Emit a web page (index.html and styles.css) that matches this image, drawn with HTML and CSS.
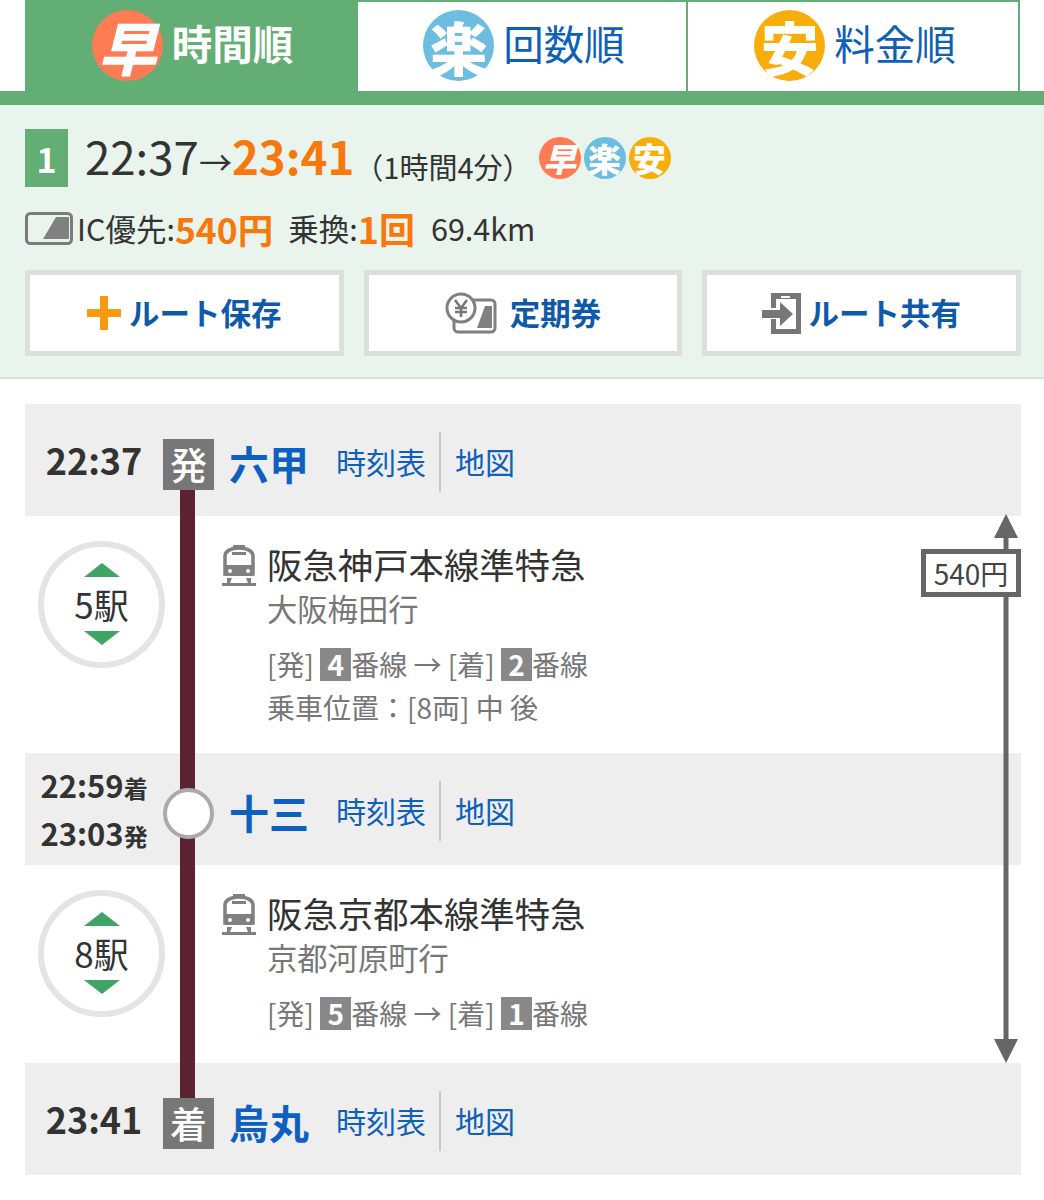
FILE: index.html
```html
<!DOCTYPE html>
<html lang="ja">
<head>
<meta charset="utf-8">
<title>経路検索結果</title>
<link rel="stylesheet" href="styles.css">
</head>
<body>
<nav class="tabs">
  <a class="tab tab-on"><span class="mark mark-fast">早</span>時間順</a>
  <a class="tab tab-mid"><span class="mark mark-easy">楽</span>回数順</a>
  <a class="tab"><span class="mark mark-cheap">安</span>料金順</a>
</nav>
<div class="tab-bar"></div>

<section class="summary">
  <div class="sum-head">
    <span class="rank">1</span>
    <span class="clock">22:37<span class="clock-arrow">→</span><b>23:41</b></span>
    <span class="duration">（1時間4分）</span>
    <span class="mini-marks">
      <span class="mini mark-fast"><i>早</i></span>
      <span class="mini mark-easy"><i>楽</i></span>
      <span class="mini mark-cheap"><i>安</i></span>
    </span>
  </div>
  <div class="sum-info">
    <svg class="ic-card" viewBox="0 0 48 33"><rect x="1.5" y="1.5" width="45" height="30" rx="4" fill="none" stroke="#7b7b7b" stroke-width="3"/><polygon points="18,27 31,5 44,5 44,27" fill="#808080"/></svg>
    <span class="ic-label">IC優先:</span><b class="hot">540円</b>
    <span class="info-gap">乗換:</span><b class="hot hot-count">1回</b>
    <span class="info-gap dist">69.4km</span>
  </div>
  <div class="actions">
    <a class="action">
      <svg class="ico-plus" viewBox="0 0 34 34"><path d="M13 0h8v13h13v8H21v13h-8V21H0v-8h13z" fill="#f79a12"/></svg>ルート保存
    </a>
    <a class="action">
      <svg class="ico-pass" viewBox="0 0 52 42"><rect x="9" y="8" width="41" height="32" rx="4" fill="#fff" stroke="#808080" stroke-width="3"/><polygon points="32,36 40,14 47,14 47,36" fill="#808080"/><circle cx="16" cy="16" r="14" fill="#fff" stroke="#808080" stroke-width="3"/><path d="M10 8l6 8 6-8M16 16v9M10 16h12M10 20h12" fill="none" stroke="#777" stroke-width="2.6"/></svg>定期券
    </a>
    <a class="action">
      <svg class="ico-share" viewBox="0 0 39 41"><path d="M9 0h30v41H9V26h5v10h20V6H14v9H9z" fill="#777"/><rect x="19" y="3" width="9" height="2" fill="#fff"/><path d="M0 17h18V9l13 12-13 12v-8H0z" fill="#777"/></svg>ルート共有
    </a>
  </div>
</section>

<main class="route">
  <div class="rail"></div>
  <svg class="fare-arrow" viewBox="0 0 24 549"><path d="M12 0l12 24H14.500V525H24L12 549 0 525h9.500V24H0z" fill="#666"/></svg>
  <div class="fare">540円</div>

  <div class="station">
    <div class="st-time">22:37</div>
    <div class="st-badge">発</div>
    <div class="st-name">六甲</div>
    <a class="st-link st-link-first">時刻表</a><a class="st-link">地図</a>
  </div>

  <div class="leg">
    <div class="stops"><span class="up"></span><span class="count">5駅</span><span class="down"></span></div>
    <svg class="train" viewBox="0 0 34 41"><path d="M3 29V11C3 6 9 3 17 3s14 3 14 8v18z" fill="none" stroke="#808080" stroke-width="3.500"/><rect x="11" y="0" width="12" height="3" fill="#808080"/><rect x="10" y="7" width="14" height="3" fill="#808080"/><path d="M3 20h28v11H3z" fill="#808080"/><circle cx="8" cy="26" r="2" fill="#fff"/><circle cx="26" cy="26" r="2" fill="#fff"/><path d="M0 38h34v3H0zM5 33h5l-2 5H5zM24 33h5v5h-3z" fill="#808080"/></svg>
    <div class="leg-text">
      <div class="line-name">阪急神戸本線準特急</div>
      <div class="bound">大阪梅田行</div>
      <div class="note note-first">[発] <span class="plat">4</span>番線 → [着] <span class="plat">2</span>番線</div>
      <div class="note">乗車位置：[8両] 中 後</div>
    </div>
  </div>

  <div class="station">
    <div class="st-time st-time-pair">
      <div>22:59<small>着</small></div>
      <div>23:03<small>発</small></div>
    </div>
    <div class="st-node"></div>
    <div class="st-name">十三</div>
    <a class="st-link st-link-first">時刻表</a><a class="st-link">地図</a>
  </div>

  <div class="leg leg-short">
    <div class="stops"><span class="up"></span><span class="count">8駅</span><span class="down"></span></div>
    <svg class="train" viewBox="0 0 34 41"><path d="M3 29V11C3 6 9 3 17 3s14 3 14 8v18z" fill="none" stroke="#808080" stroke-width="3.500"/><rect x="11" y="0" width="12" height="3" fill="#808080"/><rect x="10" y="7" width="14" height="3" fill="#808080"/><path d="M3 20h28v11H3z" fill="#808080"/><circle cx="8" cy="26" r="2" fill="#fff"/><circle cx="26" cy="26" r="2" fill="#fff"/><path d="M0 38h34v3H0zM5 33h5l-2 5H5zM24 33h5v5h-3z" fill="#808080"/></svg>
    <div class="leg-text">
      <div class="line-name">阪急京都本線準特急</div>
      <div class="bound">京都河原町行</div>
      <div class="note note-first">[発] <span class="plat">5</span>番線 → [着] <span class="plat">1</span>番線</div>
    </div>
  </div>

  <div class="station">
    <div class="st-time">23:41</div>
    <div class="st-badge">着</div>
    <div class="st-name">烏丸</div>
    <a class="st-link st-link-first">時刻表</a><a class="st-link">地図</a>
  </div>
</main>
</body>
</html>
```

FILE: styles.css
```css
* { box-sizing: border-box; }

html, body { margin: 0; background: #fff; }

body {
  font-family: "Noto Sans CJK JP", "Noto Sans", sans-serif;
  color: #333;
}

/* sort tabs */
.tabs {
  display: flex;
  height: 91px;
  padding: 0 24px 0 25px;
}

.tab {
  display: flex;
  align-items: center;
  justify-content: center;
  flex: 0 0 332px;
  padding: 0 0 6px 4px;
  border-top: 2px solid #63ae75;
  border-right: 2px solid #63ae75;
  color: #0e5fb6;
  font-size: 40.5px;
  line-height: 1;
}

.tab-on {
  flex-basis: 333px;
  background: #63ae75;
  color: #fff;
  font-weight: 700;
}

.tab-mid { flex-basis: 330px; }

.mark {
  display: flex;
  align-items: center;
  justify-content: center;
  width: 71px;
  height: 71px;
  margin: 4px 9px 0 0;
  border-radius: 50%;
  color: #fff;
  font-size: 58px;
  font-weight: 900;
}

.mark-fast { background: #ff7b54; font-style: italic; }
.mark-easy { background: #6cbde0; }
.mark-cheap { background: #f8ae0a; }

.tab-bar { height: 14px; background: #63ae75; }

/* route summary */
.summary {
  padding: 24px 23px 21px 25px;
  background: #e8f4ec;
  border-bottom: 2px solid #dcdfdc;
}

.sum-head {
  display: flex;
  align-items: center;
  height: 58px;
}

.rank {
  display: flex;
  align-items: center;
  justify-content: center;
  width: 43px;
  height: 58px;
  margin-right: 17px;
  background: #63ae75;
  color: #fff;
  font-size: 34px;
  font-weight: 700;
}

.clock { font-size: 45.6px; line-height: 58px; white-space: nowrap; }
.clock b { color: #f7780d; }
.clock-arrow { font-size: 33px; }

.duration { font-size: 29px; line-height: 58px; padding-top: 16px; white-space: nowrap; }

.mini-marks { display: flex; gap: 3px; margin-left: 7px; }

.mini {
  display: flex;
  align-items: center;
  justify-content: center;
  width: 42px;
  height: 42px;
  border-radius: 50%;
  color: #fff;
  font-size: 33px;
  font-weight: 900;
  line-height: 1;
}

.mini i { font-style: normal; }
.mark-fast i { font-style: italic; }

.sum-info {
  display: flex;
  align-items: center;
  height: 33px;
  margin-top: 25px;
  font-size: 30.5px;
  line-height: 31px;
}

.ic-card { width: 48px; height: 33px; margin-right: 4px; }
.ic-label { white-space: nowrap; }
.hot { color: #f7780d; font-size: 35.5px; font-weight: 700; }
.hot-count { font-size: 36px; }
.info-gap { margin-left: 15px; }
.dist { margin-left: 16px; }

.actions {
  display: grid;
  grid-template-columns: repeat(3, 1fr);
  gap: 20px;
  margin-top: 25px;
}

.action {
  display: flex;
  align-items: center;
  justify-content: center;
  height: 86px;
  padding-bottom: 2px;
  background: #fff;
  border: 5px solid #dcdfdc;
  color: #0e5aa9;
  font-size: 30.5px;
  font-weight: 700;
}

.ico-plus { width: 34px; height: 34px; margin-right: 8px; margin-top: 2px; }
.ico-pass { width: 52px; height: 42px; margin-right: 13px; margin-top: 2px; }
.ico-share { width: 39px; height: 41px; margin-right: 7px; margin-top: 2px; }

/* route timeline */
.route {
  position: relative;
  margin: 25px 23px 0 25px;
}

.rail {
  position: absolute;
  left: 155px;
  top: 80px;
  width: 15px;
  height: 620px;
  background: #5a2232;
}

.fare-arrow {
  position: absolute;
  top: 110px;
  right: 3px;
  width: 24px;
  height: 549px;
}

.fare {
  position: absolute;
  top: 145px;
  right: 0;
  width: 100px;
  height: 48px;
  border: 5px solid #666;
  background: #fff;
  font-size: 28px;
  line-height: 38px;
  text-align: center;
  color: #444;
}

.station {
  display: flex;
  align-items: center;
  height: 112px;
  padding-top: 28px;
  padding-bottom: 24px;
  background: #eee;
}

.st-time {
  flex: 0 0 138px;
  margin-top: -6px;
  font-size: 36px;
  font-weight: 700;
  line-height: 48px;
  text-align: center;
}

.st-time-pair {
  margin-top: -4px;
  font-size: 31px;
}

.st-time-pair div { height: 48px; }

.st-time-pair small { font-size: 24px; }

.st-badge, .st-node {
  position: relative;
  z-index: 1;
  flex: 0 0 51px;
  height: 51px;
  margin-top: 5px;
}

.st-badge {
  background: #777;
  color: #fff;
  font-size: 37px;
  font-weight: 500;
  line-height: 51px;
  text-align: center;
}

.st-node {
  background: #fff;
  border: 4px solid #aaa;
  border-radius: 50%;
}

.st-name {
  flex: 0 0 107px;
  margin-top: 2px;
  margin-left: 15px;
  color: #0e60c0;
  font-size: 40px;
  font-weight: 700;
  line-height: 50px;
}

.st-link {
  height: 60px;
  padding-bottom: 2px;
  color: #0e60b8;
  font-size: 30px;
  line-height: 58px;
}

.st-link-first {
  padding-right: 13px;
  margin-right: 14px;
  border-right: 2px solid #c8c8c8;
}

.leg {
  display: flex;
  align-items: flex-start;
  padding: 25px 0 24px 13px;
}

.leg-short { padding-bottom: 28px; }

.stops {
  display: flex;
  flex-direction: column;
  align-items: center;
  flex: 0 0 127px;
  height: 127px;
  margin-right: 57px;
  padding-top: 16px;
  border: 6px solid #e4e4e4;
  border-radius: 50%;
  background: #fff;
}

.up, .down {
  width: 0;
  height: 0;
  border-left: 18px solid transparent;
  border-right: 18px solid transparent;
}

.up { border-bottom: 14px solid #3fa565; }
.down { border-top: 14px solid #3fa565; }

.count {
  font-size: 35px;
  line-height: 54px;
}

.train { flex: 0 0 34px; height: 41px; margin-top: 4px; margin-right: 11px; }

.line-name { font-size: 35.4px; line-height: 46px; white-space: nowrap; }

.bound { color: #777; font-size: 30.3px; line-height: 42px; }

.note { color: #777; font-size: 28px; line-height: 43px; white-space: nowrap; }

.note-first { margin-top: 14px; }

.plat {
  display: inline-block;
  width: 31px;
  height: 33px;
  background: #888;
  color: #fff;
  font-weight: 700;
  line-height: 33px;
  text-align: center;
}
```
